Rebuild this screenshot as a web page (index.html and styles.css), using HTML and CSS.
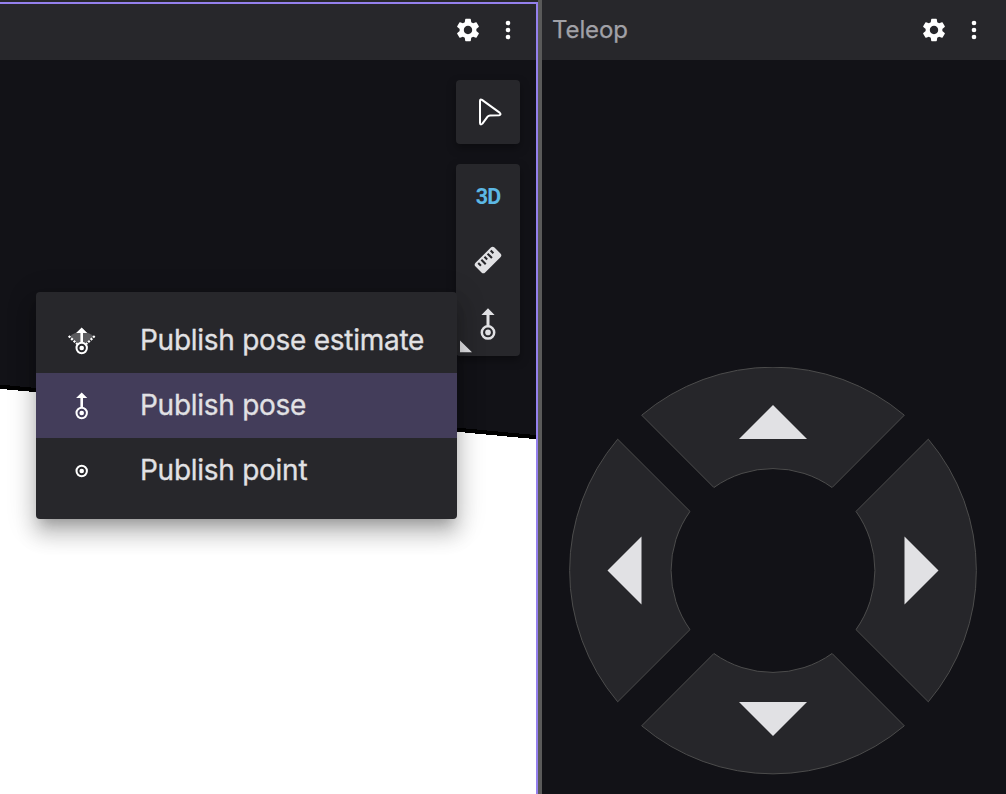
FILE: index.html
```html
<!DOCTYPE html>
<html lang="en">
<head>
<meta charset="utf-8">
<title>Teleop</title>
<link rel="stylesheet" href="styles.css">
</head>
<body>
<svg class="defs" width="0" height="0" aria-hidden="true">
  <symbol id="gear" viewBox="0 0 24 24"><path d="M19.14 12.94c.04-.3.06-.61.06-.94 0-.32-.02-.64-.07-.94l2.03-1.58c.18-.14.23-.41.12-.61l-1.92-3.32c-.12-.22-.37-.29-.59-.22l-2.39.96c-.5-.38-1.03-.7-1.62-.94l-.36-2.54c-.04-.24-.24-.41-.48-.41h-3.84c-.24 0-.43.17-.47.41l-.36 2.54c-.59.24-1.13.57-1.62.94l-2.39-.96c-.22-.08-.47 0-.59.22L2.74 8.87c-.12.21-.08.47.12.61l2.03 1.58c-.05.3-.09.63-.09.94s.02.64.07.94l-2.03 1.58c-.18.14-.23.41-.12.61l1.92 3.32c.12.22.37.29.59.22l2.39-.96c.5.38 1.03.7 1.62.94l.36 2.54c.05.24.24.41.48.41h3.84c.24 0 .44-.17.47-.41l.36-2.54c.59-.24 1.13-.56 1.62-.94l2.39.96c.22.08.47 0 .59-.22l1.92-3.32c.12-.22.07-.47-.12-.61l-2.01-1.58zM12 15.6c-1.98 0-3.6-1.62-3.6-3.6s1.62-3.6 3.6-3.6 3.6 1.62 3.6 3.6-1.62 3.6-3.6 3.6z"/></symbol>
  <symbol id="dots" viewBox="0 0 24 24"><circle cx="12" cy="6" r="2"/><circle cx="12" cy="12" r="2"/><circle cx="12" cy="18" r="2"/></symbol>
  <symbol id="target" viewBox="0 0 28 28"><circle cx="14" cy="21" r="5.2" fill="none" stroke="currentColor" stroke-width="2"/><circle cx="14" cy="21" r="2.3"/></symbol>
  <symbol id="pose" viewBox="0 0 28 28"><path d="M14 .5 19.6 6H15.3V16H12.7V6H8.4Z"/><use href="#target"/></symbol>
</svg>
<main class="workspace">
  <section class="panel scene-panel">
    <header class="bar">
      <svg class="bar-icon"><use href="#gear"/></svg>
      <svg class="bar-icon"><use href="#dots"/></svg>
    </header>
    <div class="scene">
      <svg class="ground" viewBox="0 60 536 734" shape-rendering="crispEdges">
        <path d="M0 384.6 536 435.1V794H0Z" fill="#000"/>
        <path d="M0 388.8 536 439.2V794H0Z" fill="#fff"/>
      </svg>
      <div class="tools">
        <div class="tool-group">
          <button class="tool" aria-label="Select">
            <svg class="tool-icon" viewBox="456 80 64 64"><path d="M480 101Q480 98.6 482 99.9L499.6 112.6Q501.6 114.8 499.2 115.2L490 115.5Q488.6 115.6 487.6 116.7L482.4 123.6Q480.3 125.6 480 122.8Z" fill="none" stroke="#fff" stroke-width="2" stroke-linejoin="round"/></svg>
          </button>
        </div>
        <div class="tool-group">
          <button class="tool tool-3d">3D</button>
          <button class="tool" aria-label="Measure">
            <svg class="tool-icon" viewBox="-32 -32 64 64"><g transform="rotate(-45)"><rect x="-13.4" y="-6.8" width="26.8" height="13.6" rx="2.6"/><path d="M-9 -4.8V-1M-4.6 -4.8V1.4M-.2 -4.8V-1M4.2 -4.8V1.4M8.6 -4.8V-1" stroke="#27272b" stroke-width="2.1"/></g></svg>
          </button>
          <button class="tool" aria-label="Publish">
            <svg class="tool-icon" viewBox="456 292 64 64"><path d="M488 308.2 494.6 314.9H489.5V327H486.5V314.9H481.4ZM460 340.6 472 352.2H460Z"/><circle cx="488" cy="332.4" r="6.2" fill="none" stroke="#e1e1e4" stroke-width="2.5"/><circle cx="488" cy="332.4" r="2.8"/></svg>
          </button>
        </div>
      </div>
      <div class="menu">
        <div class="menu-item">
          <svg class="menu-icon" viewBox="0 0 28 28"><path d="M14 20 1.8 9.4Q7 5 14 5T26.2 9.4Z" fill="#5b5b5e"/><path d="M1 9 9.6 17.2M27 9 18.4 17.2" fill="none" stroke="currentColor" stroke-width="2.2" stroke-dasharray="2.2 1.2"/><circle cx="14" cy="21" r="5.4" fill="#27272b"/><use href="#pose"/></svg>
          <span class="label">Publish pose estimate</span>
        </div>
        <div class="menu-item selected">
          <svg class="menu-icon"><use href="#pose"/></svg>
          <span class="label">Publish pose</span>
        </div>
        <div class="menu-item">
          <svg class="menu-icon point"><use href="#target"/></svg>
          <span class="label">Publish point</span>
        </div>
      </div>
    </div>
  </section>
  <div class="divider"></div>
  <section class="panel teleop-panel">
    <header class="bar">
      <h1 class="title">Teleop</h1>
      <svg class="bar-icon"><use href="#gear"/></svg>
      <svg class="bar-icon"><use href="#dots"/></svg>
    </header>
    <div class="teleop">
      <svg class="pad" viewBox="-204 -203.5 408 408">
        <defs>
          <g id="wedge"><path class="wedge" d="M-131.3 -155.3A203.4 203.4 0 0 1 131.3 -155.3L59.1 -83A101.7 101.7 0 0 0 -59.1 -83Z"/><path class="arrow" d="M0 -165.5 34 -131.5H-34Z"/></g>
        </defs>
        <use href="#wedge"/>
        <use href="#wedge" transform="rotate(90)"/>
        <use href="#wedge" transform="rotate(180)"/>
        <use href="#wedge" transform="rotate(270)"/>
      </svg>
    </div>
  </section>
</main>
</body>
</html>
```
FILE: styles.css
```css
* { box-sizing: border-box; }
body { margin: 0; background: #121217; font-family: Inter, "Liberation Sans", sans-serif; }
.defs { position: absolute; }
.workspace { display: flex; width: 1006px; height: 794px; overflow: hidden; }
.panel { display: flex; flex-direction: column; }
.scene-panel { width: 538px; padding-top: 2px; background: #27272b; }
.scene-panel .bar { height: 58px; border-top: 2px solid #9480ed; border-right: 2px solid #9480ed; padding: 0 14px 4px 0; }
.divider { width: 4px; background: #5a5a5a; }
.teleop-panel { flex: 1; }
.bar { display: flex; flex: none; align-items: center; justify-content: flex-end; gap: 12px; height: 60px; padding: 0 18px 0 10px; background: #27272b; }
.bar-icon { width: 28px; height: 28px; fill: #fff; }
.title { flex: 1; margin: 0; font-size: 24px; font-weight: 400; line-height: 28px; letter-spacing: -.1px; color: #a1a1a7; -webkit-text-stroke: .25px #a1a1a7; }
.scene { position: relative; flex: 1; background: #121217; border-right: 2px solid #9480ed; }
.ground { display: block; width: 536px; height: 734px; }
.tools { position: absolute; top: 20px; right: 16px; display: flex; flex-direction: column; gap: 20px; }
.tool-group { width: 64px; border-radius: 4px; background: #27272b; box-shadow: 0 4px 10px rgba(0, 0, 0, .35); }
.tool { display: flex; align-items: center; justify-content: center; width: 64px; height: 64px; margin: 0; padding: 0; border: 0; background: none; }
.tool-icon { width: 64px; height: 64px; fill: #e1e1e4; }
.tool-3d { font: 700 21.5px Roboto, sans-serif; letter-spacing: -.8px; color: #5cb8e4; }
.menu { position: absolute; top: 232px; left: 36px; width: 421px; padding: 16px 0; border-radius: 4px; background: #27272b; box-shadow: 0 10px 12px -6px rgba(0, 0, 0, .22), 0 16px 20px 2px rgba(0, 0, 0, .14), 0 6px 28px 4px rgba(0, 0, 0, .14); }
.menu-item { display: flex; align-items: center; gap: 44px; height: 65px; padding-left: 32px; font-size: 28px; letter-spacing: -.27px; color: #e1e1e4; white-space: nowrap; }
.label { padding-bottom: 2px; -webkit-text-stroke: .3px #e1e1e4; }
.selected { background: #433d5a; }
.menu-icon { flex: none; width: 28px; height: 28px; color: #fff; fill: #fff; transform: translateX(-.3px); }
.point { margin-top: -14px; }
.teleop { display: flex; flex: 1; align-items: flex-end; justify-content: center; padding-bottom: 19px; padding-right: 2px; background: #121217; }
.pad { width: 408px; height: 408px; }
.wedge { fill: #26262a; stroke: #4c4c4c; stroke-width: 1; }
.arrow { fill: #e1e1e4; }
```
